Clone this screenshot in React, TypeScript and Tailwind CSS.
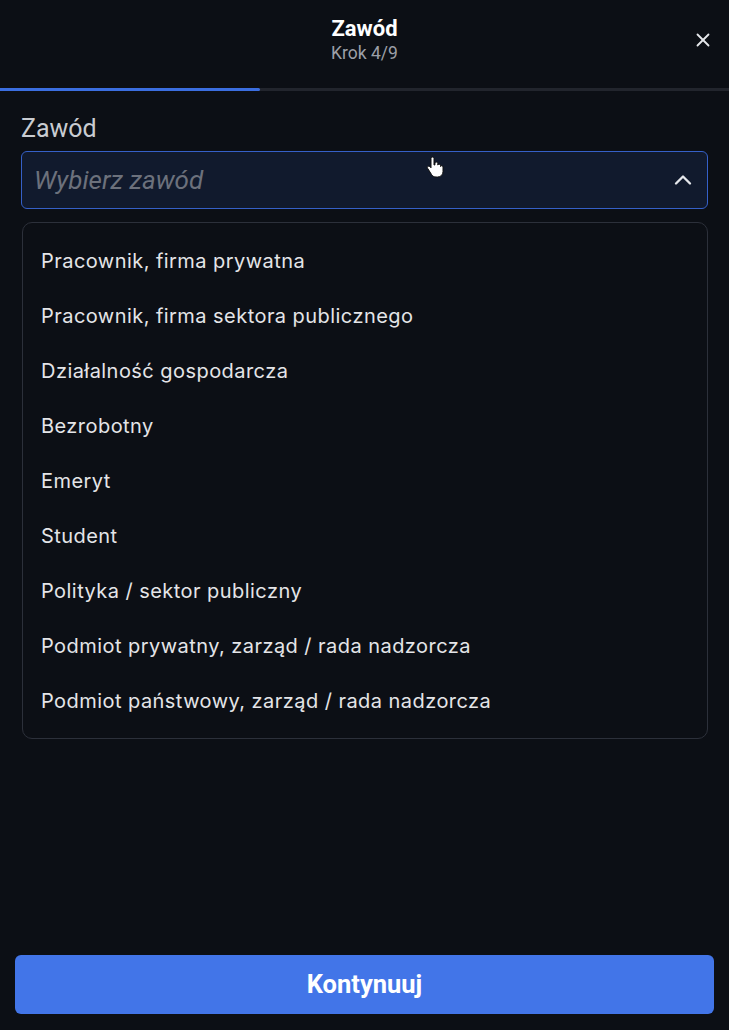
import { X, ChevronUp } from "lucide-react";

const options = [
  "Pracownik, firma prywatna",
  "Pracownik, firma sektora publicznego",
  "Działalność gospodarcza",
  "Bezrobotny",
  "Emeryt",
  "Student",
  "Polityka / sektor publiczny",
  "Podmiot prywatny, zarząd / rada nadzorcza",
  "Podmiot państwowy, zarząd / rada nadzorcza",
];

const HandCursor = () => (
  <svg width="18" height="22" viewBox="0 0 18 22" className="absolute left-[426px] top-[156px]">
    <path
      d="M5 2.5a1.5 1.5 0 0 1 3 0V9l1-.2V7.5a1.4 1.4 0 0 1 2.8 0v1.6a1.4 1.4 0 0 1 2.7.4v1a1.3 1.3 0 0 1 2.5.5v4.5c0 3.3-2.4 5.5-5.5 5.5H10c-2 0-3.3-.9-4.4-2.4L1.8 12.6a1.4 1.4 0 0 1 2-2L5 11.8z"
      fill="#fff"
      stroke="#111"
      strokeWidth="1"
      strokeLinejoin="round"
    />
  </svg>
);

export default function App() {
  return (
    <div className="relative w-[729px] h-[1030px] bg-[#0c0f15] flex flex-col font-['Inter',sans-serif] overflow-hidden">
      <header className="relative h-[88px] flex flex-col items-center pt-[15px]">
        <h1 className="text-[22px] leading-[28px] font-bold text-white font-['Roboto',sans-serif]">
          Zawód
        </h1>
        <p className="text-[17.5px] leading-[20px] text-[#9ca0a8] font-['Roboto',sans-serif]">
          Krok 4/9
        </p>
        <button className="absolute right-[15px] top-[29px] text-[#e5e7eb]">
          <X size={22} strokeWidth={2} />
        </button>
      </header>
      <div className="h-[3px] bg-[#22252d] flex">
        <div className="w-[260px] bg-[#3b6ee0] rounded-r-full" />
      </div>

      <div className="flex flex-col px-[21px] pt-[23px]">
        <label className="text-[25px] leading-[29px] text-[#c9ccd1] font-['Roboto',sans-serif] mb-[8px]">
          Zawód
        </label>
        <div className="h-[58px] rounded-[6px] border-[1.5px] border-[#3560c8] bg-[#111a2d] flex items-center justify-between pl-[12px] pr-[10px]">
          <span className="italic text-[26px] text-[#6c717c] font-['Roboto',sans-serif]">
            Wybierz zawód
          </span>
          <ChevronUp size={28} strokeWidth={2} className="text-[#e5e7eb]" />
        </div>

        <ul className="mt-[13px] ml-[1px] border border-[#2c303a] rounded-[10px] py-[10px]">
          {options.map((o) => (
            <li
              key={o}
              className="h-[55px] flex items-center px-[18px] text-[20px] text-[#e4e5e8] tracking-[0.45px]"
            >
              {o}
            </li>
          ))}
        </ul>
      </div>

      <div className="mt-auto px-[15px] pb-[16px]">
        <button className="w-full h-[59px] rounded-[6px] bg-[#4275e8] text-white text-[25.5px] font-bold font-['Roboto',sans-serif]">
          Kontynuuj
        </button>
      </div>

      <HandCursor />
    </div>
  );
}
